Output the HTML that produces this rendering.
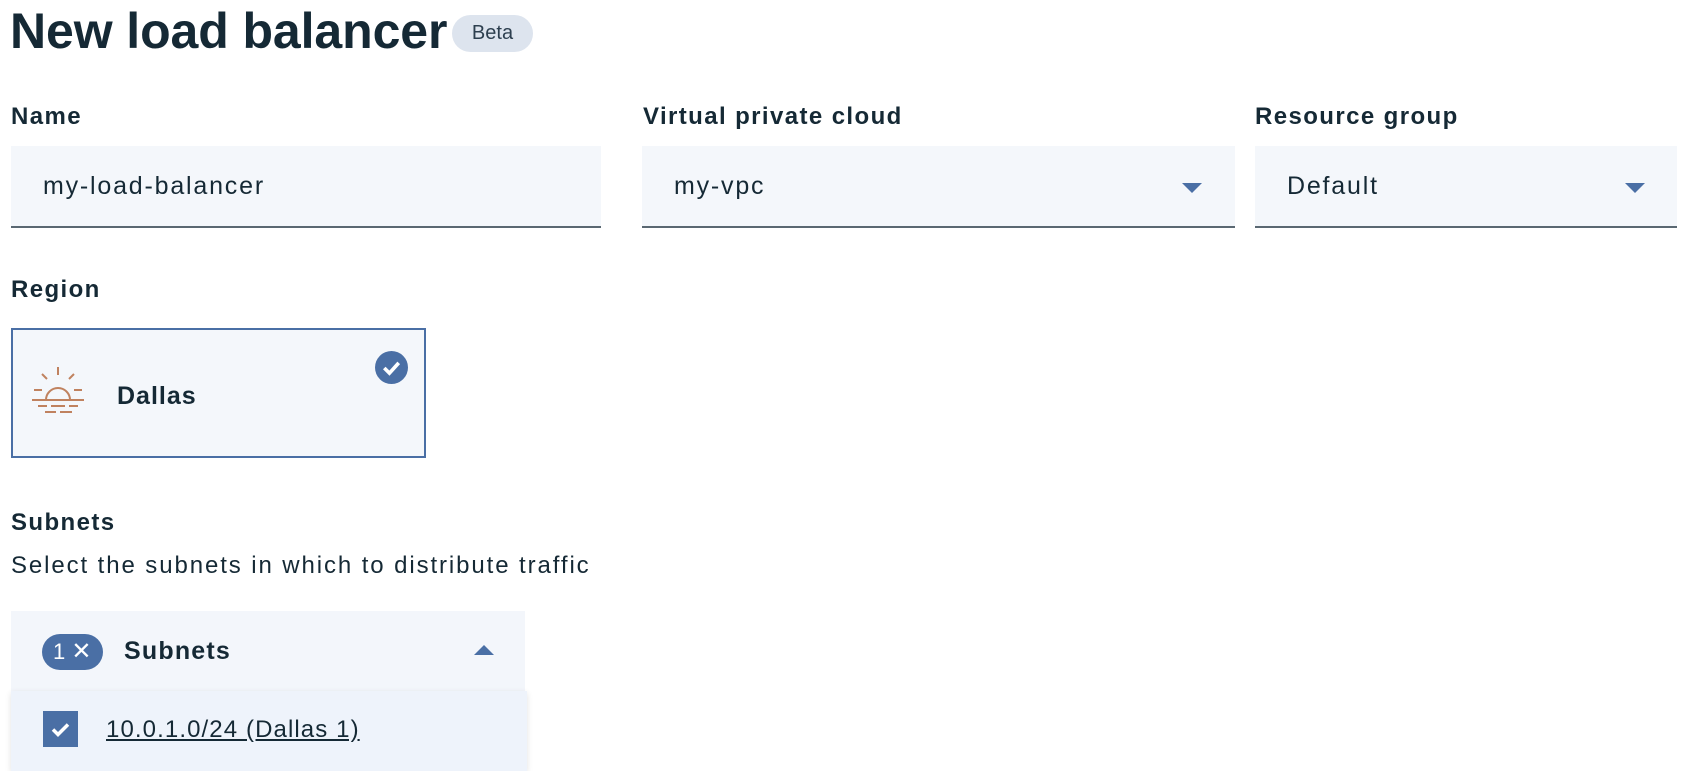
<!DOCTYPE html>
<html><head><style>
*{margin:0;padding:0;box-sizing:border-box}
body{width:1692px;height:768px;background:#fff;font-family:"Liberation Sans",sans-serif;color:#152935;position:relative;overflow:hidden}
.a{position:absolute}
.lbl{font-weight:bold;font-size:24px;letter-spacing:1.4px}
.field{background:#f4f7fb;border-bottom:2px solid #5a6872;height:82px}
.field span{position:absolute;left:32px;top:26px;font-size:25px;letter-spacing:1.8px}
.arr{position:absolute;width:0;height:0;border-left:10px solid transparent;border-right:10px solid transparent;border-top:10px solid #4a6fa5;top:37px}
</style></head><body>
<div class="a" style="left:10px;top:0px;font-size:50px;font-weight:bold;letter-spacing:-0.1px;line-height:62px">New load balancer</div>
<div class="a" style="left:452px;top:15px;width:81px;height:37px;border-radius:19px;background:#dde4ee;font-size:20px;line-height:37px;text-align:center;color:#2d3f4f">Beta</div>

<div class="a lbl" style="left:11px;top:103px">Name</div>
<div class="a lbl" style="left:643px;top:103px">Virtual private cloud</div>
<div class="a lbl" style="left:1255px;top:103px">Resource group</div>

<div class="a field" style="left:11px;top:146px;width:590px"><span>my-load-balancer</span></div>
<div class="a field" style="left:642px;top:146px;width:593px"><span>my-vpc</span><div class="arr" style="left:540px"></div></div>
<div class="a field" style="left:1255px;top:146px;width:422px"><span>Default</span><div class="arr" style="left:370px"></div></div>

<div class="a lbl" style="left:11px;top:276px">Region</div>
<div class="a" style="left:11px;top:328px;width:415px;height:130px;background:#f4f7fb;border:2px solid #4a6fa5">
 <svg class="a" style="left:18px;top:36px" width="54" height="50" viewBox="0 0 54 50" fill="none" stroke="#c0825f" stroke-width="2">
  <path d="M27 1v8M11 8l5 5M43 8l-5 5M3 24h8M43 24h8"/>
  <path d="M15 34a12 12 0 1 1 24 0"/>
  <path d="M1 34h52M7 40h9M20 40h14M38 40h9M14 46h11M29 46h12"/>
 </svg>
 <div class="a" style="left:104px;top:52px;font-weight:bold;font-size:25px;letter-spacing:1px">Dallas</div>
 <svg class="a" style="left:362px;top:21px" width="33" height="33" viewBox="0 0 32 32"><circle cx="16" cy="16" r="16" fill="#4a6fa5"/><path d="M9 16.5l5 5 9-10" stroke="#fff" stroke-width="3.5" fill="none"/></svg>
</div>

<div class="a lbl" style="left:11px;top:509px">Subnets</div>
<div class="a" style="left:11px;top:552px;font-size:24px;letter-spacing:1.9px">Select the subnets in which to distribute traffic</div>

<div class="a" style="left:11px;top:611px;width:514px;height:80px;background:#f3f6fb">
 <div class="a" style="left:31px;top:23px;width:61px;height:36px;border-radius:18px;background:#4a6fa5;color:#fff;font-size:22px;line-height:36px;padding-left:11px">1 <span style="font-size:24px">✕</span></div>
 <div class="a" style="left:113px;top:26px;font-weight:bold;font-size:25px;letter-spacing:1.2px">Subnets</div>
 <div class="a" style="left:463px;top:34px;width:0;height:0;border-left:10px solid transparent;border-right:10px solid transparent;border-bottom:10px solid #4a6fa5"></div>
</div>
<div class="a" style="left:11px;top:691px;width:516px;height:80px;background:#eef3fb;box-shadow:0 2px 6px rgba(0,0,0,.12)">
 <svg class="a" style="left:32px;top:20px" width="35" height="36" viewBox="0 0 35 36"><rect width="35" height="36" fill="#4a6fa5"/><path d="M10 18.5l5 5 10-10" stroke="#fff" stroke-width="3.5" fill="none"/></svg>
 <div class="a" style="left:95px;top:25px;font-size:24px;letter-spacing:1.1px;text-decoration:underline">10.0.1.0/24 (Dallas 1)</div>
</div>
</body></html>
